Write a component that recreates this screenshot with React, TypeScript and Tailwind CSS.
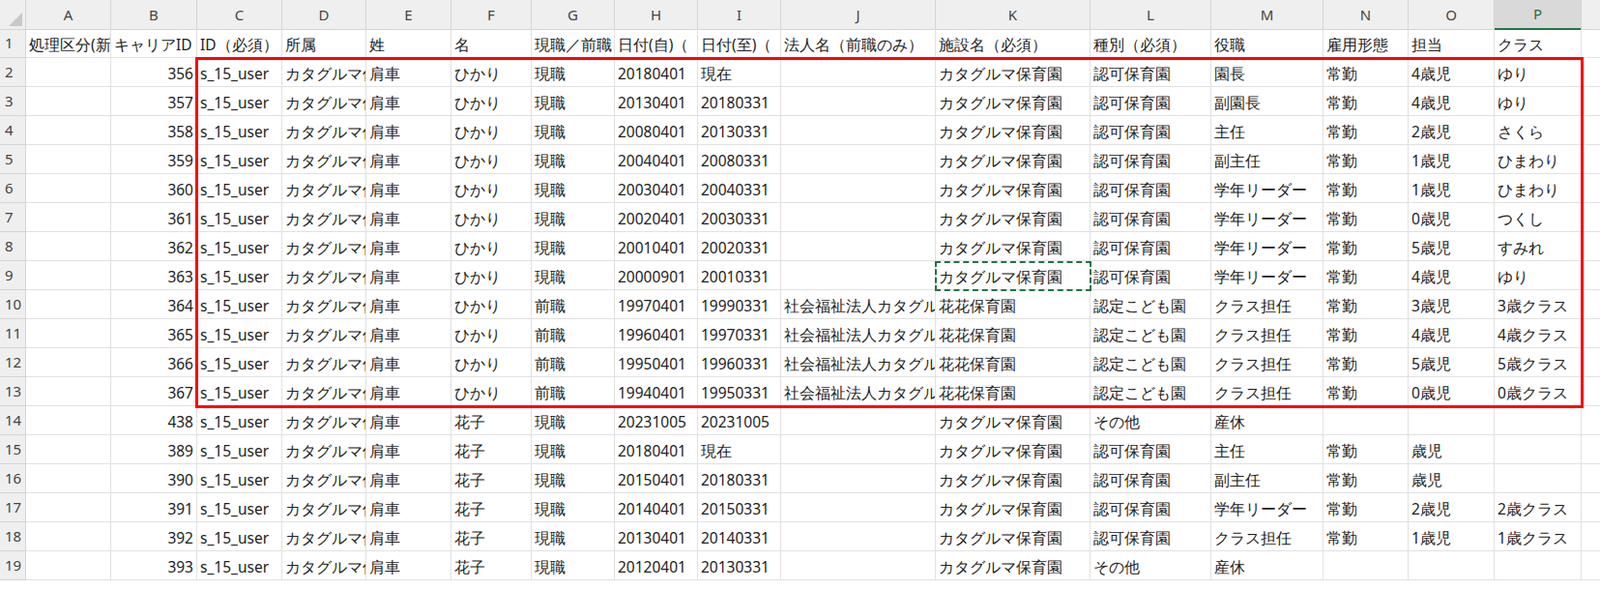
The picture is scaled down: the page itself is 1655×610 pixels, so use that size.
import React from "react";

const letters = "ABCDEFGHIJKLMNOP".split("");
const header = ["処理区分(新規", "キャリアID", "ID（必須）", "所属", "姓", "名", "現職／前職", "日付(自)（", "日付(至)（", "法人名（前職のみ）", "施設名（必須）", "種別（必須）", "役職", "雇用形態", "担当", "クラス"];

const U = "s_15_user";
const D = "カタグルマ保育園";
const rows: string[][] = [
  ["", "356", U, D, "肩車", "ひかり", "現職", "20180401", "現在", "", D, "認可保育園", "園長", "常勤", "4歳児", "ゆり"],
  ["", "357", U, D, "肩車", "ひかり", "現職", "20130401", "20180331", "", D, "認可保育園", "副園長", "常勤", "4歳児", "ゆり"],
  ["", "358", U, D, "肩車", "ひかり", "現職", "20080401", "20130331", "", D, "認可保育園", "主任", "常勤", "2歳児", "さくら"],
  ["", "359", U, D, "肩車", "ひかり", "現職", "20040401", "20080331", "", D, "認可保育園", "副主任", "常勤", "1歳児", "ひまわり"],
  ["", "360", U, D, "肩車", "ひかり", "現職", "20030401", "20040331", "", D, "認可保育園", "学年リーダー", "常勤", "1歳児", "ひまわり"],
  ["", "361", U, D, "肩車", "ひかり", "現職", "20020401", "20030331", "", D, "認可保育園", "学年リーダー", "常勤", "0歳児", "つくし"],
  ["", "362", U, D, "肩車", "ひかり", "現職", "20010401", "20020331", "", D, "認可保育園", "学年リーダー", "常勤", "5歳児", "すみれ"],
  ["", "363", U, D, "肩車", "ひかり", "現職", "20000901", "20010331", "", D, "認可保育園", "学年リーダー", "常勤", "4歳児", "ゆり"],
  ["", "364", U, D, "肩車", "ひかり", "前職", "19970401", "19990331", "社会福祉法人カタグルマ", "花花保育園", "認定こども園", "クラス担任", "常勤", "3歳児", "3歳クラス"],
  ["", "365", U, D, "肩車", "ひかり", "前職", "19960401", "19970331", "社会福祉法人カタグルマ", "花花保育園", "認定こども園", "クラス担任", "常勤", "4歳児", "4歳クラス"],
  ["", "366", U, D, "肩車", "ひかり", "前職", "19950401", "19960331", "社会福祉法人カタグルマ", "花花保育園", "認定こども園", "クラス担任", "常勤", "5歳児", "5歳クラス"],
  ["", "367", U, D, "肩車", "ひかり", "前職", "19940401", "19950331", "社会福祉法人カタグルマ", "花花保育園", "認定こども園", "クラス担任", "常勤", "0歳児", "0歳クラス"],
  ["", "438", U, D, "肩車", "花子", "現職", "20231005", "20231005", "", D, "その他", "産休", "", "", ""],
  ["", "389", U, D, "肩車", "花子", "現職", "20180401", "現在", "", D, "認可保育園", "主任", "常勤", "歳児", ""],
  ["", "390", U, D, "肩車", "花子", "現職", "20150401", "20180331", "", D, "認可保育園", "副主任", "常勤", "歳児", ""],
  ["", "391", U, D, "肩車", "花子", "現職", "20140401", "20150331", "", D, "認可保育園", "学年リーダー", "常勤", "2歳児", "2歳クラス"],
  ["", "392", U, D, "肩車", "花子", "現職", "20130401", "20140331", "", D, "認可保育園", "クラス担任", "常勤", "1歳児", "1歳クラス"],
  ["", "393", U, D, "肩車", "花子", "現職", "20120401", "20130331", "", D, "その他", "産休", "", "", ""],
];

export default function App() {
  return (
    <div className="w-[1655px] h-[610px] overflow-hidden bg-white text-[#222] relative font-['Noto_Sans_CJK_JP','Noto_Sans',sans-serif]">
      <div className="grid grid-cols-[27px_88px_89px_88px_87px_88px_83px_86px_86px_86px_160px_160px_125px_116px_88px_89px_90px_1fr] auto-rows-[30px]">
        <div className="h-[31px] bg-[#efefef] border-r border-b border-[#d4d4d4] relative overflow-hidden">
          <div className="absolute right-[3px] bottom-[3px] w-0 h-0 border-l-[14px] border-l-transparent border-b-[14px] border-b-[#c8c8c8]" />
        </div>
        {letters.map((l) => (
          <div
            key={l}
            className={
              l === "P"
                ? "h-[31px] flex items-center justify-center bg-[#d9d9d9] border-r border-[#d4d4d4] border-b-2 border-b-[#217346] text-[#217346] text-[15px] font-['Liberation_Sans',sans-serif]"
                : "h-[31px] flex items-center justify-center bg-[#efefef] border-r border-b border-[#d4d4d4] text-[#444] text-[15px] font-['Liberation_Sans',sans-serif]"
            }
          >
            {l}
          </div>
        ))}
        <div className="h-[31px] bg-[#efefef] border-b border-[#d4d4d4]" />
        {[header, ...rows].map((r, ri) => (
          <React.Fragment key={ri}>
            <div className="bg-[#efefef] border-r border-b border-[#d4d4d4] flex items-center pl-[5px] text-[15px] text-[#444] font-['Liberation_Sans',sans-serif]">
              {ri + 1}
            </div>
            {r.map((c, ci) => (
              <div
                key={ci}
                className={
                  "border-r border-b border-[#e1e1e1] whitespace-nowrap overflow-hidden flex items-end pb-[2px] px-[3px] text-[15.5px] leading-[22px] " +
                  (ci === 1 && ri > 0 ? "justify-end" : "")
                }
              >
                {c}
              </div>
            ))}
            <div className="border-b border-[#e1e1e1]" />
          </React.Fragment>
        ))}
      </div>
      <div className="absolute left-[202px] top-[59px] w-[1436px] h-[363px] border-[3px] border-[#ff0000] pointer-events-none" />
      <div className="absolute left-[967px] top-[270px] w-[162px] h-[31px] border-2 border-dashed border-[#217346] pointer-events-none" />
    </div>
  );
}
